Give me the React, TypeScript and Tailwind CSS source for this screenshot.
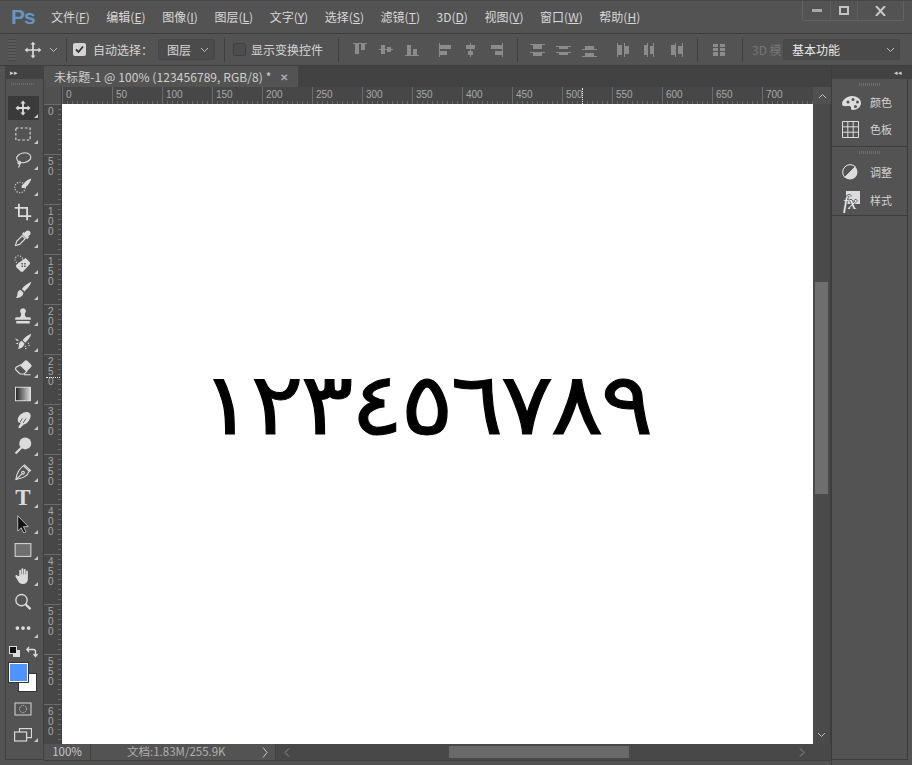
import type { ReactNode } from 'react'

const CJK = 'font-["Noto_Sans_CJK_SC","Liberation_Sans",sans-serif]'

const DIGITS = ['١', '٢', '٣', '٤', '٥', '٦', '٧', '٨', '٩']

const MENUS = [
  ['文件(', 'F', ')'],
  ['编辑(', 'E', ')'],
  ['图像(', 'I', ')'],
  ['图层(', 'L', ')'],
  ['文字(', 'Y', ')'],
  ['选择(', 'S', ')'],
  ['滤镜(', 'T', ')'],
  ['3D(', 'D', ')'],
  ['视图(', 'V', ')'],
  ['窗口(', 'W', ')'],
  ['帮助(', 'H', ')'],
]

function Ico({ children, size = 24 }: { children: ReactNode; size?: number }) {
  return (
    <svg width={size} height={size} viewBox="0 0 24 24" fill="#dcdcdc" stroke="none">
      {children}
    </svg>
  )
}

const stroke = { fill: 'none', stroke: '#dcdcdc', strokeWidth: 1.5 }

// tool strip, top to bottom, 26px pitch
const TOOLS: { icon: ReactNode; corner?: boolean; active?: boolean }[] = [
  {
    active: true,
    corner: true,
    icon: (
      <Ico>
        <path d="M12 2l3.500 4h-2.300v4.800H18V8.500l4 3.500-4 3.500v-2.300h-4.800V18h2.300L12 22l-3.500-4h2.300v-4.800H6v2.300L2 12l4-3.500v2.300h4.800V6H8.500z" />
      </Ico>
    ),
  },
  {
    corner: true,
    icon: (
      <Ico>
        <rect x="2.500" y="4" width="19" height="16" {...stroke} strokeDasharray="3.500 2.500" />
      </Ico>
    ),
  },
  {
    corner: true,
    icon: (
      <Ico>
        <ellipse cx="13" cy="9" rx="9.500" ry="6.500" {...stroke} transform="rotate(-10 13 9)" />
        <path d="M7 14c-2 2 1.500 3 .500 5l-1.500 3" {...stroke} />
        <circle cx="7" cy="15.500" r="1.800" {...stroke} />
      </Ico>
    ),
  },
  {
    corner: true,
    icon: (
      <Ico>
        <circle cx="8" cy="14" r="7" {...stroke} strokeDasharray="1.500 2" />
        <path d="M23 2c-1 5-5 10-8 12-2 1-4 1-5 0 0-2 1-4 3-5 2-3 6-6 10-7z" />
      </Ico>
    ),
  },
  {
    corner: true,
    icon: (
      <Ico>
        <path d="M6.500 1v16.500H23M1 6.500h16.500V23" fill="none" stroke="#dcdcdc" strokeWidth="2.400" />
      </Ico>
    ),
  },
  {
    corner: true,
    icon: (
      <Ico>
        <path d="M16 3c1-1.300 3.500-1.500 5 0s1.300 4 0 5l-2 2 1 1-2.500 2.500-7-7L13 4l1 1z" />
        <path d="M11 9l-7.500 7.500L2 22l5.500-1.500L15 13z" fill="none" stroke="#dcdcdc" strokeWidth="1.500" />
      </Ico>
    ),
  },
  {
    corner: true,
    icon: (
      <Ico>
        <circle cx="6.500" cy="6" r="5" {...stroke} strokeDasharray="1.500 2" />
        <path d="M15.500 4l5 5c1.300 1.300 1.300 2.700 0 4l-8 8.500c-1.300 1.300-2.800 1.300-4 0L3.500 16.500c-1.300-1.300-1.300-2.700 0-4z" />
        <path d="M10 10.500h2v2h-2zM13.500 10.500h2v2h-2zM10 14h2v2h-2zM13.500 14h2v2h-2z" fill="#535353" />
      </Ico>
    ),
  },
  {
    corner: true,
    icon: (
      <Ico>
        <path d="M23 1c-1 5-6 10-9 13l-3.500-3.500C13 7 18 3 23 1zM9 12l3.500 3.500c0 4-4 7-10 7 2-2 2-4 2-5.500 0-3 2.500-5 4.500-5z" />
      </Ico>
    ),
  },
  {
    corner: true,
    icon: (
      <Ico>
        <path d="M12 1.500a4 4 0 0 1 2.500 7c0 2.500.500 4 1.800 5H21c1 0 1.500 1 1.500 2V17h-21v-1.500c0-1 .500-2 1.500-2h4.700c1.300-1 1.800-2.500 1.800-5A4 4 0 0 1 12 1.500zM3 18.500h18V22H3z" />
      </Ico>
    ),
  },
  {
    corner: true,
    icon: (
      <Ico>
        <path d="M23 1c-1 5-5 9-8 12l-3.500-3.500C14 6 18 3 23 1zM10.500 10.500l3.500 3.500c-1 4-4 7-9 7 1.500-1.500 1.500-3 1.500-5 0-3 2-5.500 4-5.500z" />
        <path d="M1 7l6 2.500-3 1zM2 14l4-1.500-1 2.500z" />
        <path d="M15 17l1 5M19 13l1.500 5" {...stroke} strokeDasharray="1.500 1.500" />
      </Ico>
    ),
  },
  {
    corner: true,
    icon: (
      <Ico>
        <path d="M14 2.500c1.300-1.300 2.700-1.300 4 0l4.500 4.500c1.300 1.300 1.300 2.700 0 4L17 16.500 8.500 8z" />
        <path d="M8.500 8l8.500 8.500-3.500 3.500H8L3 15c-1.300-1.300-1.300-2.700 0-4z" {...stroke} />
        <path d="M13 21h9" {...stroke} />
      </Ico>
    ),
  },
  {
    corner: true,
    icon: (
      <Ico>
        <defs>
          <linearGradient id="grad" x1="0" x2="1" y1="0" y2="0">
            <stop offset="0" stopColor="#222" />
            <stop offset="1" stopColor="#ddd" />
          </linearGradient>
        </defs>
        <rect x="2" y="3" width="20" height="18" fill="url(#grad)" stroke="#e6e6e6" strokeWidth="1.200" />
      </Ico>
    ),
  },
  {
    corner: true,
    icon: (
      <Ico>
        <path d="M21 3c2.500 3 1 7-2 11-2 2.500-4 4-6 4l-5 5-2.500-1 3.500-6c-2 0-4-1-4-4 0-4 3-8 8-10 3-1 6-1 8 1z" />
        <path d="M11 10l-3 5M16 10l-4 6" stroke="#535353" strokeWidth="1.200" />
      </Ico>
    ),
  },
  {
    corner: true,
    icon: (
      <Ico>
        <circle cx="15" cy="8.500" r="8" />
        <path d="M10 14l-8 8" fill="none" stroke="#dcdcdc" strokeWidth="2.800" />
      </Ico>
    ),
  },
  {
    corner: true,
    icon: (
      <Ico>
        <path d="M14 2.500l8 7.500-2.500 2c-1 5-6 8-17 10 1-10 5-15 11.500-19.500z" {...stroke} />
        <path d="M3 22l7.500-7.500" {...stroke} />
        <circle cx="12" cy="13" r="1.800" {...stroke} />
        <path d="M13 4l7.500 7" {...stroke} />
      </Ico>
    ),
  },
  {
    corner: true,
    icon: <span className='font-["Liberation_Serif",serif] text-[23px] font-bold leading-6 text-[#dcdcdc]'>T</span>,
  },
  {
    corner: true,
    icon: (
      <Ico>
        <path d="M5 1l14 14.500h-6.500l3.500 7-3 1.500-3.500-7L5 21.500z" fill="#111" stroke="#dcdcdc" strokeWidth="1" />
      </Ico>
    ),
  },
  {
    corner: true,
    icon: (
      <Ico>
        <rect x="1.500" y="3.500" width="21" height="17" fill="#6f6f6f" stroke="#e0e0e0" strokeWidth="1.300" />
      </Ico>
    ),
  },
  {
    corner: true,
    icon: (
      <Ico>
        <path d="M7 12V5c0-1.800 2.300-1.800 2.300 0v5h.700V3c0-1.800 2.400-1.800 2.400 0v7h.700V4c0-1.800 2.400-1.800 2.400 0v6h.700V6c0-1.800 2.300-1.800 2.300 0v9.500c0 4.500-3 7-6.500 7s-5-1-6.500-4L2 13c-1-1.800 1.300-3 2.500-1.500z" />
      </Ico>
    ),
  },
  {
    icon: (
      <Ico>
        <circle cx="10" cy="9.500" r="7.500" {...stroke} strokeWidth="1.800" />
        <path d="M15.500 15l6.500 6.500" fill="none" stroke="#dcdcdc" strokeWidth="3" />
      </Ico>
    ),
  },
  {
    corner: true,
    icon: (
      <Ico>
        <circle cx="4.500" cy="12" r="2.500" />
        <circle cx="12" cy="12" r="2.500" />
        <circle cx="19.500" cy="12" r="2.500" />
      </Ico>
    ),
  },
]

function AlignIcon({ kind }: { kind: number }) {
  // small bars of the align / distribute row
  const shapes: ReactNode[] = [
    <path key="a" d="M1 1h14v1H1zM3 2h4v10H3zM9 2h4v6H9z" />,
    <path key="b" d="M1 7h14v1H1zM3 3h4v9H3zM9 5h4v5H9z" />,
    <path key="c" d="M1 13h14v1H1zM3 3h4v10H3zM9 7h4v6H9z" />,
    <path key="d" d="M2 1h1v14H2zM3 3h11v4H3zM3 9h7v4H3z" />,
    <path key="e" d="M7 1h1v14H7zM3 3h9v4H3zM5 9h5v4H5z" />,
    <path key="f" d="M13 1h1v14h-1zM2 3h11v4H2zM6 9h7v4H6z" />,
    <path key="g" d="M1 2h15v1H1zM4 3h9v4H4zM1 10h15v1H1zM4 11h9v3H4z" />,
    <path key="h" d="M1 4h15v1H1zM4 5h9v2H4zM1 10h15v1H1zM4 11h9v2H4z" />,
    <path key="i" d="M1 7h15v1H1zM4 4h9v3H4zM1 14h15v1H1zM4 11h9v3H4z" />,
    <path key="j" d="M2 1h1v14H2zM3 3h4v10H3zM9 1h1v14H9zM10 4h4v8h-4z" />,
    <path key="k" d="M5 1h1v14H5zM2 3h3v10H2zM11 1h1v14h-1zM8 4h3v8H8z" />,
    <path key="l" d="M6 1h1v14H6zM2 3h4v10H2zM13 1h1v14h-1zM9 4h4v8H9z" />,
    <path key="m" d="M2 2h5v3H2zM2 6h5v3H2zM2 10h5v4H2zM9 2h5v3H9zM9 6h5v3H9zM9 10h5v4H9z" />,
  ]
  return (
    <svg width="16" height="16" viewBox="0 0 16 16" fill="#8b8b8b">
      {shapes[kind]}
    </svg>
  )
}

function Sep({ className = '' }: { className?: string }) {
  return <div className={`h-[24px] w-px bg-[#3f3f3f] ${className}`} />
}

function Chevron({ className = '' }: { className?: string }) {
  return (
    <svg width="9" height="6" viewBox="0 0 9 6" className={className} fill="none" stroke="#bdbdbd" strokeWidth="1">
      <path d="M1 1l3.500 3.500L8 1" />
    </svg>
  )
}

function Options() {
  return (
    <div className={`flex h-[33px] shrink-0 items-center border-y border-[#3c3c3c] text-[12px] text-[#d6d6d6] ${CJK}`}>
      <div className="ml-[8px] h-[22px] w-[8px] bg-[repeating-linear-gradient(#474747_0_1px,#5b5b5b_1px_3px)]" />
      <div className="ml-[7px]">
        <Ico size={20}>
          <path d="M12 2l3 3.500h-2v5.500h5.500V9l3.500 3-3.500 3v-2H13v5.500h2L12 22l-3-3.500h2V13H5.500v2L2 12l3.500-3v2H11V5.500H9z" />
        </Ico>
      </div>
      <Chevron className="ml-[6px]" />
      <Sep className="ml-[8px]" />
      <div className="ml-[6px] flex h-[13px] w-[13px] items-center justify-center rounded-[2px] bg-[#d4d4d4]">
        <svg width="9" height="9" viewBox="0 0 9 9" fill="none" stroke="#333" strokeWidth="1.800">
          <path d="M1 4.500l2.500 2.500L8 1.500" />
        </svg>
      </div>
      <span className="ml-[7px] w-[56px] whitespace-nowrap">自动选择：</span>
      <div className="ml-[9px] flex h-[21px] w-[57px] items-center justify-between rounded-[2px] border border-[#474747] bg-[#4b4b4b] pl-[8px] pr-[5px]">
        <span>图层</span>
        <Chevron />
      </div>
      <Sep className="ml-[9px]" />
      <div className="ml-[8px] h-[13px] w-[13px] rounded-[2px] border border-[#3f3f3f] bg-[#4d4d4d]" />
      <span className="ml-[5px] w-[72px] whitespace-nowrap">显示变换控件</span>
      <Sep className="ml-[15px]" />
      <div className="ml-[13px] flex w-[68px] justify-between">
        <AlignIcon kind={0} />
        <AlignIcon kind={1} />
        <AlignIcon kind={2} />
      </div>
      <div className="ml-[17px] flex w-[68px] justify-between">
        <AlignIcon kind={3} />
        <AlignIcon kind={4} />
        <AlignIcon kind={5} />
      </div>
      <Sep className="ml-[12px]" />
      <div className="ml-[11px] flex w-[68px] justify-between">
        <AlignIcon kind={6} />
        <AlignIcon kind={7} />
        <AlignIcon kind={8} />
      </div>
      <div className="ml-[18px] flex w-[70px] justify-between">
        <AlignIcon kind={9} />
        <AlignIcon kind={10} />
        <AlignIcon kind={11} />
      </div>
      <Sep className="ml-[12px]" />
      <div className="ml-[13px]">
        <AlignIcon kind={12} />
      </div>
      <Sep className="ml-[15px]" />
      <span className="ml-[9px] w-[31px] whitespace-nowrap text-[#777777]">3D 模</span>
      <div className="flex h-[21px] w-[117px] items-center justify-between rounded-[2px] border border-[#474747] bg-[#4a4a4a] pl-[8px] pr-[4px] text-[#e8e8e8]">
        <span>基本功能</span>
        <Chevron />
      </div>
    </div>
  )
}

function HRuler() {
  const marks = Array.from({ length: 15 }, (_, i) => i * 50)
  return (
    <div className="relative flex h-[17px] bg-[#474747]">
      <div className="h-full w-[18px] shrink-0 border-r border-[#3a3a3a] bg-[#505050]" />
      <div className="flex min-w-0 flex-1">
        {marks.map((m, i) => (
          <div
            key={m}
            className={`flex h-full shrink-0 items-start border-l border-[#6b6b6b] bg-[repeating-linear-gradient(90deg,transparent_0_4px,#6b6b6b_4px_5px)] bg-[length:100%_3px] bg-bottom bg-no-repeat pl-[3px] font-['Liberation_Sans',sans-serif] text-[10px] leading-[16px] text-[#a8a8a8] ${
              i === 14 ? 'w-[51px]' : 'w-[50px]'
            }`}
          >
            {m}
          </div>
        ))}
      </div>
      <div className="flex h-full w-[18px] shrink-0 items-center justify-center bg-[#505050]">
        <Chevron className="rotate-180" />
      </div>
      {/* cursor position marker */}
      <div className="absolute left-[538px] top-[1px] h-[16px] border-l border-dotted border-[#e8e8e8]" />
    </div>
  )
}

function VRuler() {
  const marks = Array.from({ length: 13 }, (_, i) => i * 50)
  return (
    <div className="relative h-full w-[18px] shrink-0 overflow-hidden border-r border-[#3a3a3a] bg-[#474747]">
      {marks.map((m) => (
        <div
          key={m}
          className="flex h-[50px] flex-col items-start border-t border-[#6b6b6b] bg-[repeating-linear-gradient(transparent_0_4px,#6b6b6b_4px_5px)] bg-[length:3px_100%] bg-right bg-no-repeat pl-[4px] pt-[2px] font-['Liberation_Sans',sans-serif] text-[10px] leading-[10px] text-[#a8a8a8]"
        >
          {String(m)
            .split('')
            .map((d, i) => (
              <span key={i}>{d}</span>
            ))}
        </div>
      ))}
      <div className="absolute left-[2px] top-[273px] w-[16px] border-t border-dotted border-[#e8e8e8]" />
    </div>
  )
}

function Corner() {
  return (
    <svg width="4" height="4" viewBox="0 0 4 4" fill="#c8c8c8" className="absolute bottom-[2px] right-[1px]">
      <path d="M4 0v4H0z" />
    </svg>
  )
}

function Tools() {
  return (
    <div className="mb-[5px] flex min-h-0 flex-1 flex-col items-center border-x border-b border-[#3f3f3f] bg-[#535353] pr-[3px]">
      <div className="flex h-[17px] w-full shrink-0 items-start justify-center">
        <div className="mt-[4px] h-[2px] w-[24px] bg-[repeating-linear-gradient(90deg,#6a6a6a_0_1px,transparent_1px_2px)]" />
      </div>
      <div className="flex flex-col items-center gap-[2px]">
        {TOOLS.map((t, i) => (
          <div
            key={i}
            className={`relative flex h-[24px] w-[31px] items-center justify-center ${
              t.active ? 'rounded-[1px] bg-[#3a3a3a]' : ''
            }`}
          >
            <div className="flex h-[18px] w-[18px] items-center justify-center [&>svg]:h-[18px] [&>svg]:w-[18px]">
              {t.icon}
            </div>
            {t.corner && <Corner />}
          </div>
        ))}
      </div>
      {/* default colors + swap */}
      <div className="mt-[6px] flex w-[29px] items-center justify-between">
        <svg width="12" height="12" viewBox="0 0 12 12">
          <rect x="4" y="4" width="7" height="7" fill="#ddd" />
          <rect x="0.500" y="0.500" width="7" height="7" fill="#111" stroke="#ddd" />
        </svg>
        <svg width="12" height="12" viewBox="0 0 12 12" fill="none" stroke="#ddd" strokeWidth="1.300">
          <path d="M1 3.500h6.500a2 2 0 0 1 2 2V10M3 1L.800 3.500 3 6M7.500 8l2 2.500 2-2.500" />
        </svg>
      </div>
      <div className="relative mt-[5px] h-[32px] w-[29px]">
        <div className="absolute left-[9px] top-[10px] h-[19px] w-[19px] border border-[#333] bg-white" />
        <div className="absolute left-[0px] top-[0px] h-[19px] w-[19px] border border-white bg-[#4d94ff] outline outline-1 outline-[#333]" />
      </div>
      <div className="mt-[7px]">
        <svg width="18" height="14" viewBox="0 0 18 14" fill="none" stroke="#d8d8d8">
          <rect x="1" y="1" width="16" height="12" />
          <circle cx="9" cy="7" r="3.500" strokeDasharray="1 1" />
        </svg>
      </div>
      <div className="relative mt-[12px] flex h-[16px] w-[31px] justify-center">
        <svg width="18" height="14" viewBox="0 0 18 14" fill="#535353" stroke="#d8d8d8" strokeWidth="1.200">
          <rect x="5.500" y="0.600" width="12" height="9" />
          <rect x="0.600" y="4" width="12" height="9" />
        </svg>
        <Corner />
      </div>
    </div>
  )
}

function DockItem({ icon, label, h }: { icon: ReactNode; label: string; h: string }) {
  return (
    <div className={`flex items-center pl-[10px] text-[11px] text-[#d4d4d4] ${h} ${CJK}`}>
      <div className="flex w-[27px] justify-start">{icon}</div>
      <span className="ml-[1px]">{label}</span>
    </div>
  )
}

function Grip({ h }: { h: string }) {
  return (
    <div className={`flex justify-center ${h}`}>
      <div className="mt-[4px] h-[3px] w-[22px] bg-[repeating-linear-gradient(90deg,#6e6e6e_0_1px,transparent_1px_2px)]" />
    </div>
  )
}

function Dock() {
  return (
    <div className="flex w-[81px] shrink-0 flex-col border-l border-[#3c3c3c] pr-[4px]">
      <div className="-mr-[4px] flex h-[13px] shrink-0 items-center justify-end bg-[#424242] pr-[10px] text-[7px] leading-none text-[#cfcfcf]">
        ◂◂
      </div>
      <div className="mb-[5px] flex-1 border-b border-r border-[#3c3c3c] bg-[#535353]">
        <div className="h-[68px] border-b border-[#3c3c3c]">
          <Grip h="h-[10px]" />
          <DockItem
            h="h-[27px]"
            label="颜色"
            icon={
              <svg width="19" height="14" viewBox="0 0 19 14" fill="#dcdcdc">
                <path d="M10 0c5 0 9 3 9 7s-4 7-8 7c-2 0-2-1-2-2s0-2-2-2c-3 0-7 1-7-2 0-4 5-8 10-8z" />
                <circle cx="6" cy="6" r="1.500" fill="#535353" />
                <circle cx="11" cy="3.500" r="1.500" fill="#535353" />
                <circle cx="15.500" cy="6" r="1.500" fill="#535353" />
                <circle cx="13.500" cy="10.500" r="1.500" fill="#535353" />
              </svg>
            }
          />
          <DockItem
            h="h-[27px]"
            label="色板"
            icon={
              <svg width="17" height="17" viewBox="0 0 17 17" fill="none" stroke="#dcdcdc">
                <path d="M.500.500h16v16H.500zM5.800.500v16M11.200.500v16M.500 5.800h16M.500 11.200h16" />
              </svg>
            }
          />
        </div>
        <div className="h-[69px] border-b border-[#3c3c3c]">
          <Grip h="h-[11px]" />
          <DockItem
            h="h-[28px]"
            label="调整"
            icon={
              <svg width="16" height="16" viewBox="0 0 16 16">
                <circle cx="8" cy="8" r="7.500" fill="#dcdcdc" />
                <path d="M2.700 13.300A7.500 7.500 0 0 1 13.300 2.700z" fill="#535353" stroke="#dcdcdc" />
              </svg>
            }
          />
          <DockItem
            h="h-[28px]"
            label="样式"
            icon={
              <div className="relative h-[19px] w-[18px]">
                <div className="absolute right-[0px] top-[0px] h-[13px] w-[14px] bg-[#dcdcdc]" />
                <span className="absolute bottom-[-2px] left-[1px] font-['Liberation_Serif',serif] text-[19px] italic leading-[19px] text-[#eeeeee] [text-shadow:1px_0_#535353,-1px_0_#535353,0_-1px_#535353]">
                  fx
                </span>
              </div>
            }
          />
        </div>
      </div>
    </div>
  )
}

export default function App() {
  return (
    <div className="flex h-[765px] w-[912px] flex-col overflow-hidden bg-[#535353]">
      {/* title bar with menu */}
      <div className="relative flex h-[33px] shrink-0 items-center border-t border-[#474747] pb-[1px]">
        <span className="ml-[11px] w-[22px] font-['Liberation_Sans',sans-serif] text-[21px] font-bold leading-none tracking-[-1px] text-[#6396c2]">
          Ps
        </span>
        <div className={`ml-[18px] flex gap-[16.600px] whitespace-nowrap text-[12px] text-[#d8d8d8] ${CJK}`}>
          {MENUS.map(([a, b, c]) => (
            <span key={b}>
              {a}
              <span className="underline">{b}</span>
              {c}
            </span>
          ))}
        </div>
        <div className="absolute right-[8px] top-0 flex h-[20px] w-[102px] rounded-b-[2px] border border-t-0 border-[#636363]">
          <div className="flex w-[28px] items-center justify-center border-r border-[#5f5f5f]">
            <div className="h-[3px] w-[10px] bg-[#a8a8a8]" />
          </div>
          <div className="flex w-[27px] items-center justify-center border-r border-[#5f5f5f]">
            <div className="h-[9px] w-[10px] border-2 border-[#c4c4c4]" />
          </div>
          <div className="flex flex-1 items-center justify-center">
            <svg width="11" height="10" viewBox="0 0 11 10" fill="none" stroke="#c8c8c8" strokeWidth="2">
              <path d="M1 0l9 10M10 0L1 10" />
            </svg>
          </div>
        </div>
      </div>

      <Options />

      <div className="flex min-h-0 flex-1">
        <div className="w-[5px] shrink-0" />
        <div className="flex w-[39px] shrink-0 flex-col">
          <div className="flex h-[13px] shrink-0 items-center bg-[#424242] pl-[5px] text-[7px] leading-none text-[#cfcfcf]">
            ▸▸
          </div>
          <Tools />
        </div>

        {/* document area */}
        <div className="flex min-w-0 flex-1 flex-col">
          <div className="flex h-[21px] shrink-0 bg-[#424242]">
            <div className={`flex w-[254px] items-center justify-between bg-[#535353] pl-[10px] pr-[10px] text-[12px] tracking-[0.08px] text-[#d0d0d0] ${CJK}`}>
              <span className="whitespace-nowrap">未标题-1 @ 100% (123456789, RGB/8) *</span>
              <span className="text-[10px] font-bold text-[#aaaaaa]">✕</span>
            </div>
          </div>
          <HRuler />
          <div className="flex min-h-0 flex-1">
            <VRuler />
            <div className="flex min-w-0 flex-1 items-center justify-center bg-white pb-[40px] pr-[21px]">
              {DIGITS.map((d) => (
                <span
                  key={d}
                  className="flex w-[50px] scale-x-[1.15] justify-center font-['DejaVu_Sans',sans-serif] text-[86px] leading-none text-black [-webkit-text-stroke:1px_black]"
                >
                  {d}
                </span>
              ))}
            </div>
            <div className="flex w-[18px] shrink-0 flex-col items-center border-r border-[#3c3c3c] bg-[#4a4a4a]">
              <div className="mt-[178px] h-[212px] w-[13px] bg-[#6e6e6e]" />
              <Chevron className="mb-[6px] mt-auto" />
            </div>
          </div>
          {/* status bar */}
          <div className={`flex h-[16px] shrink-0 items-center bg-[#484848] text-[11.500px] text-[#c8c8c8] ${CJK}`}>
            <div className="flex h-full w-[47px] items-center justify-center border-r border-[#404040] bg-[#535353]">100%</div>
            <div className="flex h-full w-[185px] items-center border-r border-[#404040] bg-[#535353] pl-[36px]">
              <span className="w-[135px] whitespace-nowrap text-[#b0b0b0]">文档:1.83M/255.9K</span>
              <svg width="6" height="11" viewBox="0 0 6 11" fill="none" stroke="#c8c8c8">
                <path d="M1 .500l4 5-4 5" />
              </svg>
            </div>
            <svg width="6" height="9" viewBox="0 0 6 9" fill="none" stroke="#8e8e8e" className="ml-[8px]">
              <path d="M5 .500l-4 4 4 4" />
            </svg>
            <div className="ml-[159px] h-[12px] w-[180px] bg-[#6a6a6a]" />
            <svg width="6" height="9" viewBox="0 0 6 9" fill="none" stroke="#8e8e8e" className="ml-[170px]">
              <path d="M1 .500l4 4-4 4" />
            </svg>
          </div>
          <div className="h-[5px] shrink-0 border-t border-[#3f3f3f] bg-[#535353]" />
        </div>

        <Dock />
      </div>
    </div>
  )
}
